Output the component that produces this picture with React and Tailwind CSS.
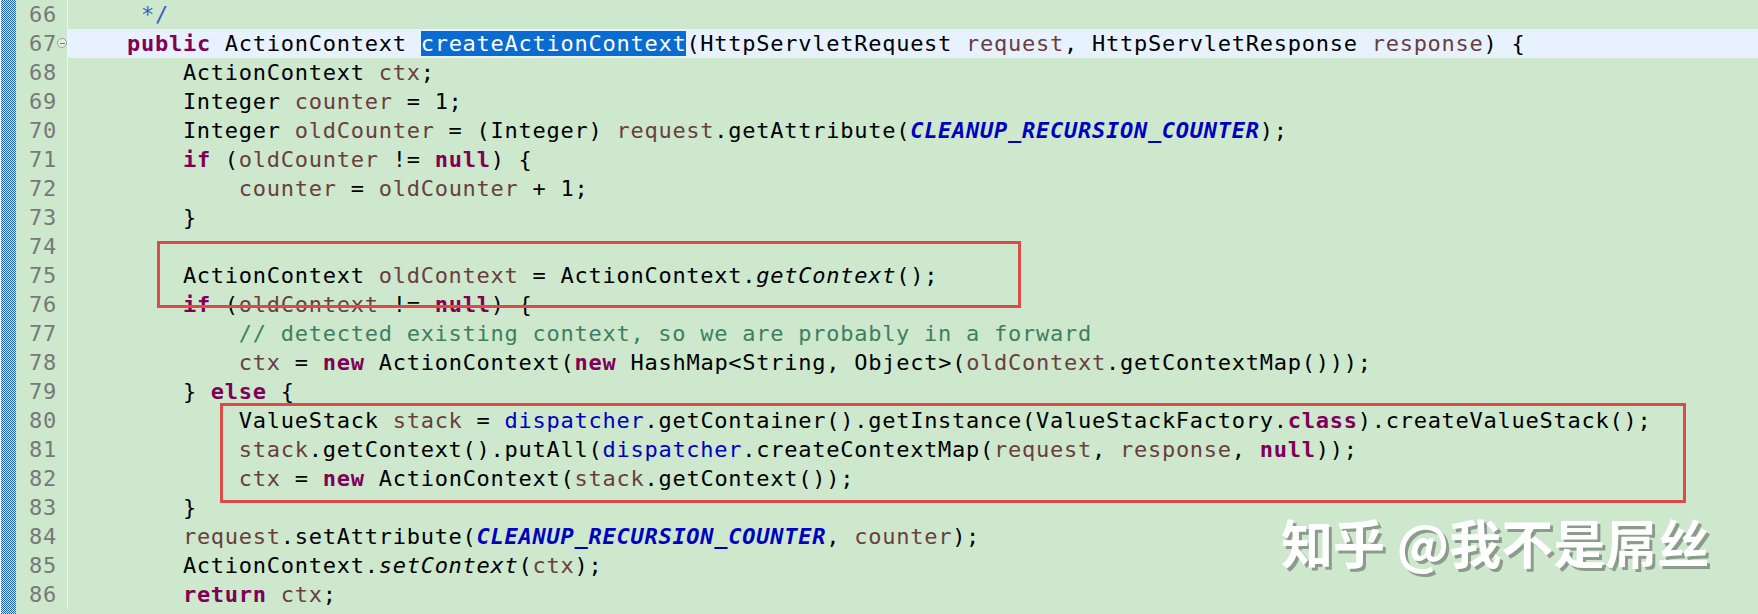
import React from "react";

const cls = {
  p: "text-black",
  k: "text-[#7f0055] font-bold",
  v: "text-[#6a3e3e]",
  c: "text-[#0000c0] font-bold italic",
  f: "text-[#0000c0]",
  i: "text-black italic",
  m: "text-[#3f7f5f]",
  j: "text-[#3f5fbf]",
  s: "text-white bg-[#0a6bd0]",
};

const lines = [
  [66, [["     */", "j"]]],
  [67, [["    ", "p"], ["public", "k"], [" ActionContext ", "p"], ["createActionContext", "s"], ["(HttpServletRequest ", "p"], ["request", "v"], [", HttpServletResponse ", "p"], ["response", "v"], [") {", "p"]]],
  [68, [["        ActionContext ", "p"], ["ctx", "v"], [";", "p"]]],
  [69, [["        Integer ", "p"], ["counter", "v"], [" = 1;", "p"]]],
  [70, [["        Integer ", "p"], ["oldCounter", "v"], [" = (Integer) ", "p"], ["request", "v"], [".getAttribute(", "p"], ["CLEANUP_RECURSION_COUNTER", "c"], [");", "p"]]],
  [71, [["        ", "p"], ["if", "k"], [" (", "p"], ["oldCounter", "v"], [" != ", "p"], ["null", "k"], [") {", "p"]]],
  [72, [["            ", "p"], ["counter", "v"], [" = ", "p"], ["oldCounter", "v"], [" + 1;", "p"]]],
  [73, [["        }", "p"]]],
  [74, [["", "p"]]],
  [75, [["        ActionContext ", "p"], ["oldContext", "v"], [" = ActionContext.", "p"], ["getContext", "i"], ["();", "p"]]],
  [76, [["        ", "p"], ["if", "k"], [" (", "p"], ["oldContext", "v"], [" != ", "p"], ["null", "k"], [") {", "p"]]],
  [77, [["            // detected existing context, so we are probably in a forward", "m"]]],
  [78, [["            ", "p"], ["ctx", "v"], [" = ", "p"], ["new", "k"], [" ActionContext(", "p"], ["new", "k"], [" HashMap<String, Object>(", "p"], ["oldContext", "v"], [".getContextMap()));", "p"]]],
  [79, [["        } ", "p"], ["else", "k"], [" {", "p"]]],
  [80, [["            ValueStack ", "p"], ["stack", "v"], [" = ", "p"], ["dispatcher", "f"], [".getContainer().getInstance(ValueStackFactory.", "p"], ["class", "k"], [").createValueStack();", "p"]]],
  [81, [["            ", "p"], ["stack", "v"], [".getContext().putAll(", "p"], ["dispatcher", "f"], [".createContextMap(", "p"], ["request", "v"], [", ", "p"], ["response", "v"], [", ", "p"], ["null", "k"], ["));", "p"]]],
  [82, [["            ", "p"], ["ctx", "v"], [" = ", "p"], ["new", "k"], [" ActionContext(", "p"], ["stack", "v"], [".getContext());", "p"]]],
  [83, [["        }", "p"]]],
  [84, [["        ", "p"], ["request", "v"], [".setAttribute(", "p"], ["CLEANUP_RECURSION_COUNTER", "c"], [", ", "p"], ["counter", "v"], [");", "p"]]],
  [85, [["        ActionContext.", "p"], ["setContext", "i"], ["(", "p"], ["ctx", "v"], [");", "p"]]],
  [86, [["        ", "p"], ["return", "k"], [" ", "p"], ["ctx", "v"], [";", "p"]]],
];

export default function App() {
  return (
    <div className="relative w-[1758px] h-[614px] overflow-hidden bg-[#cde8cd] flex font-['DejaVu_Sans_Mono',monospace] text-[22px] leading-[29px] tracking-[0.74px]">
      <div className="w-[16px] h-full border-l border-[#f4f4f4] bg-[repeating-conic-gradient(#1f62b0_0%_25%,#d2e2f3_0%_50%)] bg-[length:2px_2px]" />
      <div className="flex-1 flex flex-col">
        {lines.map(([n, toks]) => (
          <div key={n} className="flex h-[29px]">
            <div className="relative w-[52px] shrink-0 border-r border-[#eef5ee] text-right pr-[10px] text-[#787878]">
              {n}
              {n === 67 && (
                <span className="absolute right-[0px] top-[9px] w-[10px] h-[10px] rounded-full border border-[#9aa09a] bg-[#e6efe6] flex items-center justify-center">
                  <span className="w-[5px] h-px bg-[#777]" />
                </span>
              )}
            </div>
            <div className={`flex-1 pl-[3px] whitespace-pre ${n === 67 ? "bg-[#e8f2fe]" : ""}`}>
              {toks.map(([t, c], i) => (
                <span key={i} className={cls[c]}>{t}</span>
              ))}
            </div>
          </div>
        ))}
      </div>

      <div className="absolute left-[157px] top-[241px] w-[864px] h-[67px] border-[3px] border-[#dc4b47]" />
      <div className="absolute left-[220px] top-[403px] w-[1466px] h-[100px] border-[3px] border-[#dc4b47]" />

      <div className="absolute left-[1281px] top-[512px] font-['Noto_Sans_CJK_SC',sans-serif] font-bold text-[52px] leading-[60px] tracking-normal text-white whitespace-pre [text-shadow:3px_3px_0_#8c9c8c]">
        知乎 @我不是屌丝
      </div>
    </div>
  );
}
